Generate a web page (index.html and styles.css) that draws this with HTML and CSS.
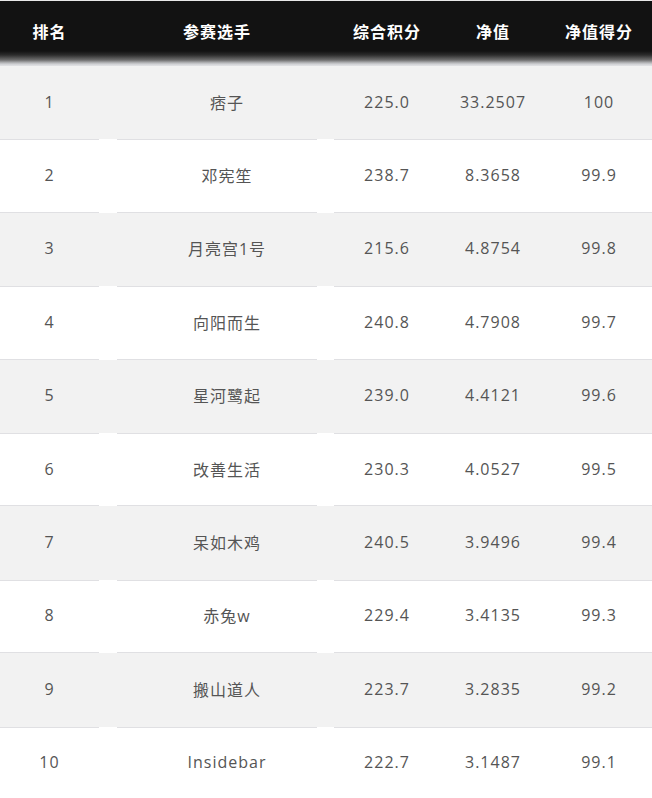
FILE: index.html
```html
<!DOCTYPE html>
<html lang="zh-CN">
<head>
<meta charset="utf-8">
<title>排名</title>
<link rel="stylesheet" href="styles.css">
</head>
<body>
<div class="board">
  <div class="head">
    <div class="c rank">排名</div>
    <div class="c name">参赛选手</div>
    <div class="stats">
      <div class="c">综合积分</div>
      <div class="c">净值</div>
      <div class="c">净值得分</div>
    </div>
  </div>
  <div class="row odd">
    <div class="c rank">1</div><div class="c name">痞子</div>
    <div class="stats"><div class="c">225.0</div><div class="c">33.2507</div><div class="c">100</div></div>
  </div>
  <div class="row even">
    <div class="c rank">2</div><div class="c name">邓宪笙</div>
    <div class="stats"><div class="c">238.7</div><div class="c">8.3658</div><div class="c">99.9</div></div>
  </div>
  <div class="row odd">
    <div class="c rank">3</div><div class="c name">月亮宫1号</div>
    <div class="stats"><div class="c">215.6</div><div class="c">4.8754</div><div class="c">99.8</div></div>
  </div>
  <div class="row even">
    <div class="c rank">4</div><div class="c name">向阳而生</div>
    <div class="stats"><div class="c">240.8</div><div class="c">4.7908</div><div class="c">99.7</div></div>
  </div>
  <div class="row odd">
    <div class="c rank">5</div><div class="c name">星河鹭起</div>
    <div class="stats"><div class="c">239.0</div><div class="c">4.4121</div><div class="c">99.6</div></div>
  </div>
  <div class="row even">
    <div class="c rank">6</div><div class="c name">改善生活</div>
    <div class="stats"><div class="c">230.3</div><div class="c">4.0527</div><div class="c">99.5</div></div>
  </div>
  <div class="row odd">
    <div class="c rank">7</div><div class="c name">呆如木鸡</div>
    <div class="stats"><div class="c">240.5</div><div class="c">3.9496</div><div class="c">99.4</div></div>
  </div>
  <div class="row even">
    <div class="c rank">8</div><div class="c name">赤兔w</div>
    <div class="stats"><div class="c">229.4</div><div class="c">3.4135</div><div class="c">99.3</div></div>
  </div>
  <div class="row odd">
    <div class="c rank">9</div><div class="c name">搬山道人</div>
    <div class="stats"><div class="c">223.7</div><div class="c">3.2835</div><div class="c">99.2</div></div>
  </div>
  <div class="row even">
    <div class="c rank">10</div><div class="c name">Insidebar</div>
    <div class="stats"><div class="c">222.7</div><div class="c">3.1487</div><div class="c">99.1</div></div>
  </div>
</div>
</body>
</html>
```
FILE: styles.css
```css
html, body {
  margin: 0;
  padding: 0;
  background: #ffffff;
}
body {
  font-family: "Open Sans", "Noto Sans CJK SC", sans-serif;
  font-size: 16px;
  letter-spacing: 1px;
  color: #555555;
}
.board {
  width: 652px;
  border-top: 1px solid #e8e8e8;
}
.head, .row {
  display: flex;
  align-items: stretch;
}
.head {
  height: 65px;
  color: #ffffff;
  font-weight: bold;
  background: linear-gradient(to bottom, #121212 0, #121212 50px, #2c2c2c 54px, #6e6e6e 59px, #b9babd 62px, #dcdde0 64px, #dfe0e3 65px);
}
.head .c {
  padding-bottom: 6px;
}
.row {
  height: 73.4px;
}
.row .c {
  padding-bottom: 2px;
}
.row.odd {
  background: #f2f2f2;
}
.row.even {
  background: #ffffff;
}
.c {
  display: flex;
  align-items: center;
  justify-content: center;
  box-sizing: border-box;
  white-space: nowrap;
}
.rank {
  width: 99px;
  margin-right: 18px;
}
.name {
  width: 200px;
  margin-right: 17px;
}
.row .name {
  padding-left: 20px;
}
.stats {
  flex: 1;
  display: flex;
  box-sizing: border-box;
}
.stats .c {
  flex: 1;
}
.row.even .rank,
.row.even .name,
.row.even .stats {
  border-top: 1px solid #e0e0e3;
  border-bottom: 1px solid #e0e0e3;
}
```
